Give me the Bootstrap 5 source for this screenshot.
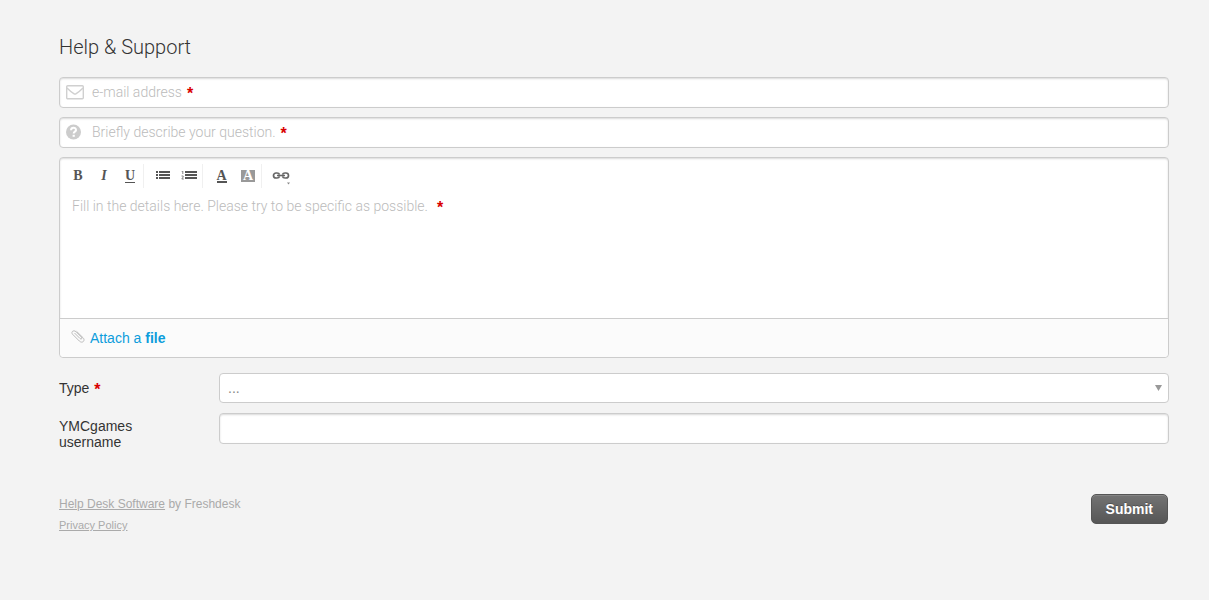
<!DOCTYPE html>
<html lang="en">
<head>
<meta charset="utf-8">
<meta name="viewport" content="width=device-width, initial-scale=1">
<title>Help &amp; Support</title>
<link href="https://cdn.jsdelivr.net/npm/bootstrap@5.3.0/dist/css/bootstrap.min.css" rel="stylesheet">
<style>
body { background: #f3f3f3; color: #333; font: 14px/16px "Liberation Sans", Arial, sans-serif; }
.page { padding: 36px 40px 24px 59px; }
.title { font: 300 20px/22px Roboto, "Liberation Sans", sans-serif; margin-bottom: 19px; }
.box { background: #fff; border: 1px solid #ccc; border-radius: 4px; box-shadow: inset 0 1px 2px rgba(0,0,0,.15); }
.line { margin-bottom: 9px; }
.field { height: 31px; color: #333; width: 100%; padding: 4px 32px; font-size: 14px; }
.hint, .area-hint { position: absolute; color: #bbb; font: 300 14px/16px Roboto, "Liberation Sans", sans-serif; pointer-events: none; }
.hint { inset: 0; padding: 0 7px 2px; }
.hint svg { width: 18px; margin-right: 8px; }
.req { color: #d90000; font: bold 16px/14px "Liberation Sans", Arial, sans-serif; padding-top: 4px; margin-left: 5px; }
.editor { margin-bottom: 15px; }
.tools { height: 35px; padding: 0 5px; }
.tools button { width: 26px; height: 24px; border: 0; background: none; padding: 0; color: #555; font: bold 14px/16px "Liberation Serif", "Times New Roman", serif; }
.tools .parted { width: 33px; padding-left: 5px; border-left: 1px solid #f0f0f0; }
.tools .ink { width: 10px; line-height: 11px; border-bottom: 2px solid #555; }
.tools .fill { width: 14px; line-height: 12px; color: #fff; background: #999; }
.tools .under { line-height: 12px; border-bottom: 1px solid #555; }
.area { display: block; width: 100%; height: 125px; border: 0; background: none; padding: 4px 12px; resize: none; }
.area-hint { top: 4px; left: 12px; }
.area-hint .req { margin-left: 9px; }
.attach { border-top: 1px solid #ccc; background: #fbfbfb; height: 39px; border-radius: 0 0 4px 4px; padding: 0 11px; }
.attach a { color: #0d9ddb; margin-left: 5px; }
.side { width: 160px; padding-right: 60px; flex: none; }
.name-label { padding-top: 5px; }
.picker-row { margin-bottom: 10px; }
.picker { appearance: none; width: 100%; height: 30px; border: 1px solid #ccc; border-radius: 4px; background: #fff; color: #888; padding: 0 8px; }
.caret { position: absolute; right: 7px; top: 12px; pointer-events: none; }
.foot { padding-top: 44px; }
.credits { color: #aaa; font-size: 12px; line-height: 21px; }
.credits a { color: #aaa; }
.policy { font-size: 11px; }
.send { height: 30px; padding: 0 14px; margin-right: 1px; color: #fff; font-size: 14px; font-weight: bold; line-height: 16px; border: 1px solid #555; border-radius: 5px; background: linear-gradient(#737373, #565656); box-shadow: inset 0 1px #858585; text-shadow: 0 -1px rgba(0,0,0,.25); }
</style>
</head>
<body>
<main class="container-fluid page">
  <h1 class="title">Help &amp; Support</h1>
  <form>
    <div class="position-relative line">
      <input class="box field d-block" type="email" id="email" required>
      <label class="hint d-flex align-items-center" for="email">
        <svg height="16" viewBox="0 0 18 16" fill="none" stroke="#d0d0d0" stroke-width="1.4" aria-hidden="true"><rect x=".7" y="1.7" width="16.6" height="13" rx="1"/><path d="M1 4c2.500 2.500 5 4.500 6.800 5.700q1.200.8 2.400 0C12 8.500 14.500 6.500 17 4"/></svg>
        <span>e-mail address</span><span class="req">*</span>
      </label>
    </div>
    <div class="position-relative line">
      <input class="box field d-block" type="text" id="question" required>
      <label class="hint d-flex align-items-center" for="question">
        <svg height="16" viewBox="0 0 18 16" aria-hidden="true"><circle cx="7.500" cy="8" r="7.500" fill="#ccc"/><path d="M5 6.200C5.100 2.800 10.100 3 10 6.100 9.900 7.700 7.700 7.700 7.700 9.600" fill="none" stroke="#fff" stroke-width="2"/><rect x="6.600" y="10.800" width="2.200" height="2" fill="#fff"/></svg>
        <span>Briefly describe your question.</span><span class="req">*</span>
      </label>
    </div>
    <div class="box editor">
      <div class="tools d-flex align-items-center" role="toolbar" aria-label="Formatting">
        <button type="button" aria-label="Bold">B</button>
        <button type="button" class="fst-italic" aria-label="Italic">I</button>
        <button type="button" aria-label="Underline"><span class="d-inline-block under">U</span></button>
        <button type="button" class="parted" aria-label="Bulleted list"><svg class="d-block mx-auto" width="14" height="10" fill="#555"><path d="M0 0h2v2H0zM0 3h2v2H0zM0 6h2v2H0zM3 0h11v2H3zM3 3h11v2H3zM3 6h11v2H3z"/></svg></button>
        <button type="button" aria-label="Numbered list"><svg class="d-block mx-auto" width="16" height="10" fill="#555"><path d="M4 0h12v2H4zM4 3h12v2H4zM4 6h12v2H4z"/><path d="M.5 0h1.300v3M.5 5h1.700v1L.8 8h2" fill="none" stroke="#666" stroke-width=".8"/></svg></button>
        <button type="button" class="parted" aria-label="Text colour"><span class="d-inline-block ink">A</span></button>
        <button type="button" aria-label="Highlight colour"><span class="d-inline-block fill">A</span></button>
        <button type="button" class="parted" aria-label="Link"><svg class="d-block mx-auto" width="18" height="18" fill="none" stroke="#666" stroke-width="1.700"><path d="M7.500 7.500Q7 6 5 6H4a2.500 2.500 0 0 0 0 5h1q2 0 2.500-1.500M10.500 7.500Q11 6 13 6h1a2.500 2.500 0 0 1 0 5h-1q-2 0-2.500-1.500M5 8.500h8"/><path d="M15 15.500h3l-1.500 2z" fill="#888" stroke="none"/></svg></button>
      </div>
      <div class="position-relative">
        <textarea class="area" id="details" required></textarea>
        <label class="area-hint d-flex align-items-center" for="details"><span>Fill in the details here. Please try to be specific as possible.</span><span class="req">*</span></label>
      </div>
      <div class="attach d-flex align-items-center">
        <svg class="mb-1" width="14" height="14" viewBox="0 0 14 14" fill="none" stroke="#bbb" stroke-width="1" aria-hidden="true"><path d="M3.500 4l5.500 5.500q1 1 1.700.3t-.3-1.700L5 2.700C3 .7-.5 2.500 1.500 5.200l6.800 6.800c3 3 6.500-.5 3.700-3.300L5.500 2.300"/></svg>
        <a class="text-decoration-none" href="#">Attach a <b>file</b></a>
      </div>
    </div>
    <div class="d-flex align-items-center picker-row">
      <label class="side d-flex align-items-center" for="type"><span>Type</span><span class="req">*</span></label>
      <div class="position-relative flex-grow-1">
        <select class="picker d-block" id="type"><option>...</option></select>
        <svg class="caret" width="7" height="6" fill="#999" aria-hidden="true"><path d="M0 0h7L3.500 6z"/></svg>
      </div>
    </div>
    <div class="d-flex">
      <label class="side name-label" for="username">YMCgames username</label>
      <input class="box field flex-grow-1" type="text" id="username">
    </div>
    <div class="d-flex justify-content-between align-items-start foot">
      <div class="credits">
        <div><a href="#">Help Desk Software</a> by Freshdesk</div>
        <div class="policy"><a href="#">Privacy Policy</a></div>
      </div>
      <button class="send" type="submit">Submit</button>
    </div>
  </form>
</main>
<script src="https://cdn.jsdelivr.net/npm/bootstrap@5.3.0/dist/js/bootstrap.bundle.min.js"></script>
</body>
</html>
